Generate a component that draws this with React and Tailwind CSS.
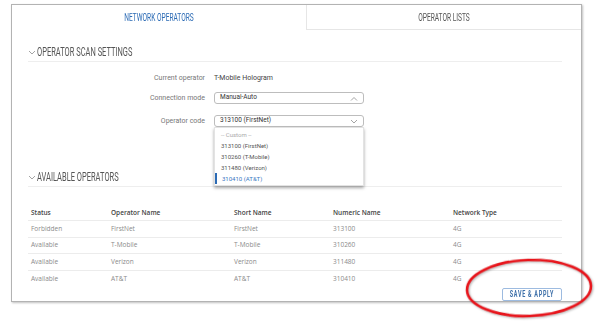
import React from "react";

const OPERATORS = [
  { status: "Forbidden", name: "FirstNet", short: "FirstNet", num: "313100", type: "4G" },
  { status: "Available", name: "T-Mobile", short: "T-Mobile", num: "310260", type: "4G" },
  { status: "Available", name: "Verizon", short: "Verizon", num: "311480", type: "4G" },
  { status: "Available", name: "AT&T", short: "AT&T", num: "310410", type: "4G" },
];

const OPTIONS = ["313100 (FirstNet)", "310260 (T-Mobile)", "311480 (Verizon)"];

// no condensed face installed, so squeeze Roboto horizontally
function Cond({ children, className = "" }) {
  return (
    <span className={`inline-block whitespace-nowrap leading-none font-['Roboto',sans-serif] scale-x-[0.6] ${className}`}>
      {children}
    </span>
  );
}

function Chevron({ up }) {
  return (
    <svg width="8" height="5" viewBox="0 0 8 5" className="text-[#9a9a9a] shrink-0">
      <path d={up ? "M1 4.5L4 1.5L7 4.5" : "M1 1L4 4L7 1"} fill="none" stroke="currentColor" strokeWidth="0.9" />
    </svg>
  );
}

function SectionHeader({ children }) {
  return (
    <div className="flex items-center gap-[1px] h-[14px] border-b border-[#eeeeee] pb-[2px] box-content">
      <Chevron />
      <Cond className="origin-left text-[12.5px] text-[#555]">{children}</Cond>
    </div>
  );
}

function Select({ value, up, children }) {
  return (
    <div className="relative">
      <div className="w-[150px] h-[12px] rounded-[3px] border border-[#bdbdbd] bg-white flex items-center justify-between px-[5px] text-[6.5px] text-[#333]">
        <span>{value}</span>
        <Chevron up={up} />
      </div>
      {children}
    </div>
  );
}

export default function App() {
  return (
    <div className="w-[612px] h-[332px] bg-white relative overflow-hidden font-['Roboto',sans-serif]">
      <div className="ml-[11px] mt-[4px] w-[571px] h-[298px] border border-[#b3b3b3] shadow-[1px_1px_2px_rgba(0,0,0,0.25)]">
        <div className="flex h-[25px]">
          <div className="w-[294px] flex items-center justify-center">
            <Cond className="text-[11px] text-[#2c6bb5]">NETWORK OPERATORS</Cond>
          </div>
          <div className="flex-1 flex items-center justify-center border-l border-b border-[#e6e6e6]">
            <Cond className="text-[11px] text-[#555]">OPERATOR LISTS</Cond>
          </div>
        </div>

        <div className="pl-[16px] pr-[19px] pt-[15px]">
          <SectionHeader>OPERATOR SCAN SETTINGS</SectionHeader>

          <div className="mt-[12px] flex items-center h-[9px]">
            <div className="w-[186px] pr-[9px] text-right text-[7px] text-[#777]">Current operator</div>
            <span className="text-[7px] text-[#444]">T-Mobile Hologram</span>
          </div>
          <div className="mt-[9px] flex items-center">
            <div className="w-[186px] pr-[9px] text-right text-[7px] text-[#777]">Connection mode</div>
            <Select value="Manual-Auto" up />
          </div>
          <div className="mt-[11px] flex items-center">
            <div className="w-[186px] pr-[9px] text-right text-[7px] text-[#777]">Operator code</div>
            <Select value="313100 (FirstNet)">
              <div className="absolute left-0 top-full w-[150px] h-[59px] bg-white border border-[#e3e3e3] shadow-[0_2px_3px_rgba(0,0,0,0.35)] z-10 pt-[1px] text-[6px]">
                <div className="h-[11px] flex items-center pl-[6px] text-[#aaa]">-- Custom --</div>
                {OPTIONS.map((o) => (
                  <div key={o} className="h-[11px] flex items-center pl-[6px] text-[#555]">
                    {o}
                  </div>
                ))}
                <div className="h-[11px] flex items-center pl-[5px] border-l-[2px] border-[#2c6bb5] text-[#3a77c2]">310410 (AT&amp;T)</div>
              </div>
            </Select>
          </div>

          <div className="mt-[43px]">
            <SectionHeader>AVAILABLE OPERATORS</SectionHeader>
          </div>

          <div className="mt-[19px] text-[6.5px] font-['Open_Sans',sans-serif]">
            <div className="grid grid-cols-[83px_123px_99px_120px_1fr] h-[15px] items-center font-semibold text-[#444] border-b border-[#ececec]">
              <div className="pl-[3px]">Status</div>
              <div>Operator Name</div>
              <div>Short Name</div>
              <div>Numeric Name</div>
              <div>Network Type</div>
            </div>
            {OPERATORS.map((r, i) => (
              <div
                key={r.num}
                className={`grid grid-cols-[83px_123px_99px_120px_1fr] h-[16.5px] items-center text-[#8a8a8a] ${i < 3 ? "border-b border-[#ececec]" : ""}`}
              >
                <div className="pl-[3px]">{r.status}</div>
                <div>{r.name}</div>
                <div>{r.short}</div>
                <div>{r.num}</div>
                <div>{r.type}</div>
              </div>
            ))}
          </div>

          <div className="flex justify-end mt-[1px]">
            <button
              type="button"
              className="w-[60px] h-[13px] rounded-[2px] border border-[#9dbbe0] bg-white flex items-center justify-center"
            >
              <Cond className="text-[9px] font-bold text-[#3b6ea8] tracking-[1.2px]">SAVE &amp; APPLY</Cond>
            </button>
          </div>
        </div>
      </div>

      <svg className="absolute left-[462px] top-[257px]" width="136" height="64" viewBox="0 0 136 64">
        <ellipse cx="67" cy="31" rx="62" ry="28" fill="none" stroke="#e8141b" strokeWidth="2.6" transform="rotate(-2 67 31)" style={{ filter: "drop-shadow(1px 1px 1px rgba(0,0,0,0.3))" }} />
      </svg>
    </div>
  );
}
